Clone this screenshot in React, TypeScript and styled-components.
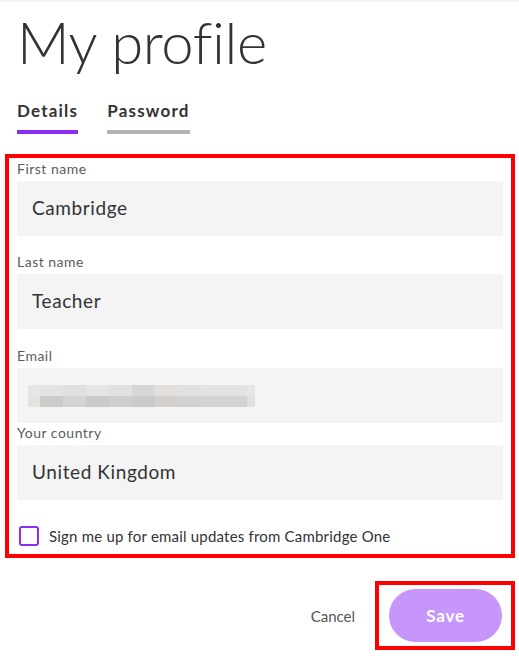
import { createGlobalStyle } from 'styled-components';
import styled from 'styled-components';

const Global = createGlobalStyle`
  html, body {
    margin: 0;
    background: #fff;
  }
  body {
    font-family: Lato, "Noto Sans", sans-serif;
    color: #333;
  }
`;

const Page = styled.div`
  width: 519px;
  height: 659px;
  border-top: 2px solid #f3f3f3;
  box-sizing: border-box;
`;

const Title = styled.h1`
  margin: 0;
  padding: 4px 0 0 17px;
  font-size: 58px;
  line-height: 72px;
  font-weight: 300;
  color: #333;
  letter-spacing: -0.4px;
`;

const Tabs = styled.div`
  display: flex;
  gap: 29px;
  padding: 23px 0 0 17px;
`;

const Tab = styled.div<{ $active?: boolean }>`
  font-size: 17px;
  font-weight: 700;
  line-height: 20px;
  letter-spacing: 1.2px;
  color: #333;
  padding-bottom: 9px;
  border-bottom: 4px solid ${({ $active }) => ($active ? '#8a2cf2' : '#b3b3b3')};
`;

const Highlight = styled.div`
  border: 4px solid #ff0000;
`;

const FormBox = styled(Highlight)`
  margin: 20px 0 0 5px;
  width: 510px;
  box-sizing: border-box;
  padding: 1px 8px 8px;
`;

const Field = styled.div<{ $gap: number }>`
  display: flex;
  flex-direction: column;
  margin-bottom: ${({ $gap }) => $gap}px;
`;

const Label = styled.label`
  font-size: 14px;
  line-height: 20px;
  letter-spacing: 0.5px;
  color: #5c5c5c;
  margin-bottom: 2px;
`;

const InputBox = styled.div`
  height: 55px;
  box-sizing: border-box;
  background: #f4f4f4;
  display: flex;
  align-items: center;
  padding: 0 0 3px 15px;
  font-size: 19px;
  letter-spacing: 0.6px;
  color: #333;
`;

const CheckRow = styled.div`
  display: flex;
  align-items: center;
  gap: 10px;
  margin-top: 26px;
  padding-left: 2px;
  font-size: 15px;
  letter-spacing: 0.2px;
  color: #333;
`;

const Checkbox = styled.span`
  width: 20px;
  height: 20px;
  box-sizing: border-box;
  border: 2px solid #8a2cf2;
  border-radius: 3px;
`;

const Footer = styled.div`
  display: flex;
  justify-content: flex-end;
  align-items: center;
  gap: 20px;
  margin: 23px 4px 0 0;
`;

const Cancel = styled.span`
  font-size: 15px;
  color: #555;
`;

const SaveBox = styled(Highlight)`
  padding: 4px 9px 4px 10px;
`;

const SaveButton = styled.button`
  width: 113px;
  height: 53px;
  border: none;
  border-radius: 27px;
  background: #c796fb;
  color: #fff;
  font-family: Lato, "Noto Sans", sans-serif;
  font-size: 17px;
  font-weight: 700;
  letter-spacing: 0.8px;
`;

const rows = [
  ['#e6e6e6', '#e3e3e3', '#e0e0e0', '#e4e4e2', '#e1e1df', '#d6d8d7', '#e2dfdc', '#e0e1e3', '#e2e2e2', '#e2e2e2', '#e5e5e5'],
  ['#e6e3df', '#cbcbcb', '#d6d4d2', '#cacaca', '#cfcfcf', '#cacaca', '#d2cfcd', '#d0d1d3', '#d3d3d3', '#d3d3d3', '#e0e0e0'],
];
const edges = [0, 12, 35, 58, 81, 104, 127, 150, 173, 196, 219, 227];

function BlurredEmail() {
  return (
    <svg width="227" height="22" viewBox="0 0 227 22" style={{ marginLeft: -4, marginTop: 3 }}>
      {rows.map((row, r) =>
        row.map((c, i) => (
          <rect key={`${r}-${i}`} x={edges[i]} y={r * 11} width={edges[i + 1] - edges[i]} height={11} fill={c} />
        )),
      )}
    </svg>
  );
}

export default function App() {
  return (
    <Page>
      <Global />
      <Title>My profile</Title>
      <Tabs>
        <Tab $active>Details</Tab>
        <Tab>Password</Tab>
      </Tabs>
      <FormBox>
        <Field $gap={16}>
          <Label>First name</Label>
          <InputBox>Cambridge</InputBox>
        </Field>
        <Field $gap={17}>
          <Label>Last name</Label>
          <InputBox>Teacher</InputBox>
        </Field>
        <Field $gap={0}>
          <Label>Email</Label>
          <InputBox>
            <BlurredEmail />
          </InputBox>
        </Field>
        <Field $gap={0}>
          <Label>Your country</Label>
          <InputBox>United Kingdom</InputBox>
        </Field>
        <CheckRow>
          <Checkbox />
          Sign me up for email updates from Cambridge One
        </CheckRow>
      </FormBox>
      <Footer>
        <Cancel>Cancel</Cancel>
        <SaveBox>
          <SaveButton>Save</SaveButton>
        </SaveBox>
      </Footer>
    </Page>
  );
}
